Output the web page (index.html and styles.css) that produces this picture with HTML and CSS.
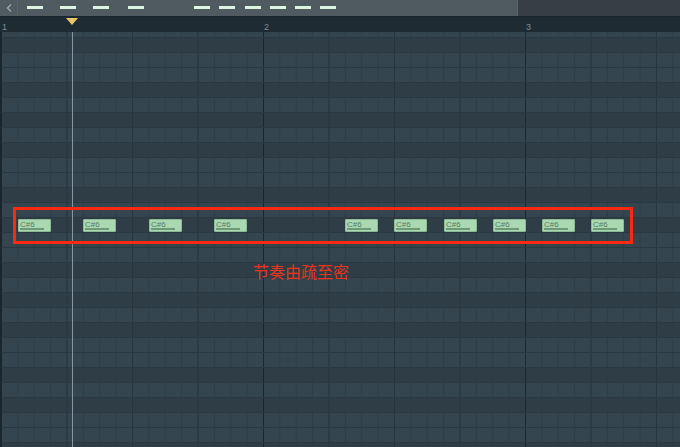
FILE: index.html
```html
<!DOCTYPE html>
<html lang="zh">
<head>
  <meta charset="UTF-8" />
  <title>Piano roll</title>
  <link rel="stylesheet" href="styles.css">
</head>
<body>
  <div class="roll">
    <div class="toolbar">
      <button class="back">
        <svg width="6" height="8" viewBox="0 0 6 8"><path d="M5 0.5 L1.5 4 L5 7.5" fill="none" stroke="#a3acb1" stroke-width="1.2"/></svg>
      </button>
      <div class="overview">
        <span class="dash" style="left: 9px"></span>
        <span class="dash" style="left: 42px"></span>
        <span class="dash" style="left: 75px"></span>
        <span class="dash" style="left: 110px"></span>
        <span class="dash" style="left: 176px"></span>
        <span class="dash" style="left: 201px"></span>
        <span class="dash" style="left: 227px"></span>
        <span class="dash" style="left: 252px"></span>
        <span class="dash" style="left: 277px"></span>
        <span class="dash" style="left: 302px"></span>
      </div>
      <div class="overview-rest"></div>
    </div>

    <div class="ruler">
      <span class="bar-num" style="left: 2px">1</span>
      <span class="bar-num" style="left: 264px">2</span>
      <span class="bar-num" style="left: 526px">3</span>
      <span class="playhead-marker"></span>
    </div>

    <div class="grid">
      <div class="row top"></div>
      <div class="row black"></div>
      <div class="row"></div>
      <div class="row"></div>
      <div class="row black"></div>
      <div class="row"></div>
      <div class="row black"></div>
      <div class="row"></div>
      <div class="row black"></div>
      <div class="row"></div>
      <div class="row"></div>
      <div class="row black"></div>
      <div class="row"></div>
      <div class="row black"></div>
      <div class="row"></div>
      <div class="row"></div>
      <div class="row black"></div>
      <div class="row"></div>
      <div class="row black"></div>
      <div class="row"></div>
      <div class="row black"></div>
      <div class="row"></div>
      <div class="row"></div>
      <div class="row black"></div>
      <div class="row"></div>
      <div class="row black"></div>
      <div class="row"></div>
      <div class="row"></div>
      <div class="row black"></div>

      <div class="playhead"></div>

      <div class="note" style="left: 17px">C#6</div>
      <div class="note" style="left: 82px">C#6</div>
      <div class="note" style="left: 148px">C#6</div>
      <div class="note" style="left: 213px">C#6</div>
      <div class="note" style="left: 344px">C#6</div>
      <div class="note" style="left: 393px">C#6</div>
      <div class="note" style="left: 443px">C#6</div>
      <div class="note" style="left: 492px">C#6</div>
      <div class="note" style="left: 541px">C#6</div>
      <div class="note" style="left: 590px">C#6</div>

      <div class="highlight"></div>
      <div class="caption">节奏由疏至密</div>
    </div>
  </div>
</body>
</html>
```

FILE: styles.css
```css
body {
  margin: 0;
  background-color: #2f3d47;
  font-family: 'Liberation Sans', sans-serif;
}

.roll {
  width: 680px;
  height: 447px;
  overflow: hidden;
  display: flex;
  flex-direction: column;
}

.toolbar {
  display: flex;
  height: 16px;
  flex-shrink: 0;
}

.back {
  display: flex;
  align-items: center;
  justify-content: center;
  width: 18px;
  height: 16px;
  padding: 0;
  border: none;
  border-right: 1px solid #5a656b;
  background-color: #4f5b61;
}

.overview {
  position: relative;
  width: 499px;
  background-color: #4f5b61;
}

.overview-rest {
  flex: 1;
  background-color: #373e46;
  border-left: 1px solid #5d686e;
}

.dash {
  position: absolute;
  top: 6px;
  width: 16px;
  height: 3px;
  background-color: #dcf5e3;
}

.ruler {
  position: relative;
  height: 16px;
  flex-shrink: 0;
  background-color: #1f2b32;
  border-top: 1px solid #1a242a;
  box-sizing: border-box;
}

.bar-num {
  position: absolute;
  top: 5px;
  font-size: 9px;
  color: #7f8b91;
}

.playhead-marker {
  position: absolute;
  left: 66px;
  top: 1px;
  width: 0;
  height: 0;
  border-left: 6px solid transparent;
  border-right: 6px solid transparent;
  border-top: 7px solid #e9c768;
}

.grid {
  position: relative;
  flex: 1;
  border-left: 1px solid #1b252c;
}

.row {
  height: 14px;
  border-bottom: 1px solid #2b3841;
  background-color: #35454f;
  background-image:
    linear-gradient(to right, #1c262d 1px, transparent 1px),
    linear-gradient(to right, #28343c 1px, transparent 1px),
    linear-gradient(to right, #2e3c45 1px, transparent 1px);
  background-size: 262px 100%, 65.5px 100%, 16.375px 100%;
}

.row.black {
  background-color: #2f3d47;
}

.row.top {
  height: 5px;
}

.playhead {
  position: absolute;
  left: 71px;
  top: 0;
  bottom: 0;
  width: 1px;
  background-color: #8797a3;
}

.note {
  position: absolute;
  top: 187px;
  width: 30px;
  height: 11px;
  padding-left: 1px;
  border: 1px solid #8cba97;
  border-radius: 1px;
  background-color: #a9d8b1;
  color: #5a7a61;
  font-size: 8px;
  line-height: 9px;
}

.note::after {
  content: "";
  position: absolute;
  left: 1px;
  bottom: 1px;
  width: 24px;
  height: 2px;
  background-color: #6f9a78;
}

.highlight {
  position: absolute;
  left: 12px;
  top: 175px;
  width: 614px;
  height: 31px;
  border: 3px solid #fa2a12;
}

.caption {
  position: absolute;
  left: 252px;
  top: 229px;
  color: #e8351d;
  font-family: 'Noto Sans CJK SC', sans-serif;
  font-size: 16px;
  line-height: 20px;
}
```
